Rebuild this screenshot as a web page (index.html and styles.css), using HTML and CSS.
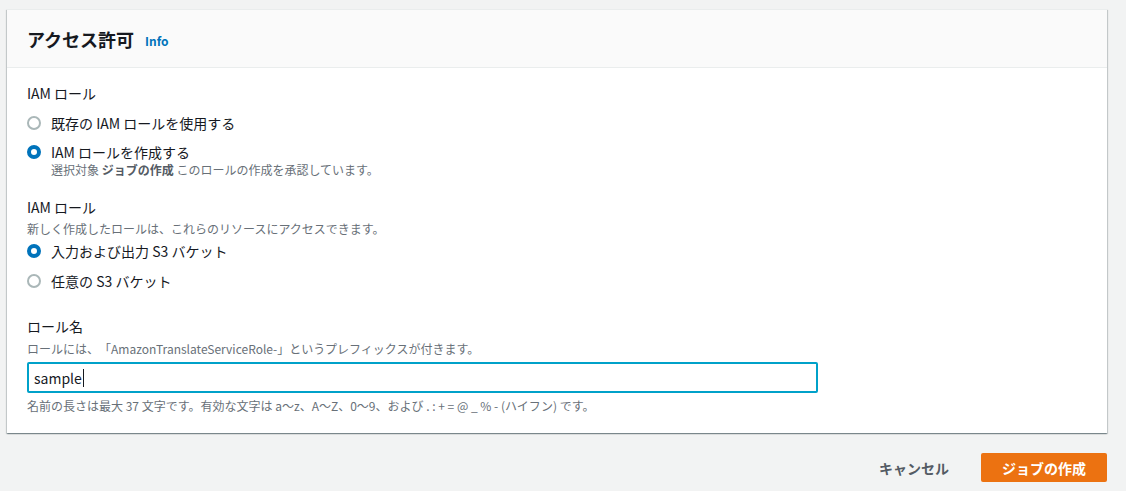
FILE: index.html
```html
<!DOCTYPE html>
<html lang="ja">
<head>
  <meta charset="UTF-8" />
  <meta name="viewport" content="width=device-width, initial-scale=1.0"/>
  <title>アクセス許可</title>
  <link rel="stylesheet" href="styles.css">
</head>
<body>

  <main class="panel">
    <div class="panel-header">
      <h2>アクセス許可</h2>
      <a class="info-link" href="#">Info</a>
    </div>

    <div class="panel-body">
      <div class="field">
        <div class="field-label">IAM ロール</div>
        <label class="radio-row">
          <span class="radio"></span>
          <span class="radio-text">既存の IAM ロールを使用する</span>
        </label>
        <label class="radio-row with-desc">
          <span class="radio checked"></span>
          <span class="radio-text">
            IAM ロールを作成する
            <span class="radio-desc">選択対象 <b>ジョブの作成</b> このロールの作成を承認しています。</span>
          </span>
        </label>
      </div>

      <div class="field second">
        <div class="field-label">IAM ロール</div>
        <div class="field-desc">新しく作成したロールは、これらのリソースにアクセスできます。</div>
        <label class="radio-row tight">
          <span class="radio checked"></span>
          <span class="radio-text">入力および出力 S3 バケット</span>
        </label>
        <label class="radio-row">
          <span class="radio"></span>
          <span class="radio-text">任意の S3 バケット</span>
        </label>
      </div>

      <div class="field third">
        <div class="field-label">ロール名</div>
        <div class="field-desc">ロールには、「AmazonTranslateServiceRole-」というプレフィックスが付きます。</div>
        <div class="text-input">sample<span class="caret"></span></div>
        <div class="field-desc constraint">名前の長さは最大 37 文字です。有効な文字は a～z、A～Z、0～9、および . : + = @ _ % - (ハイフン) です。</div>
      </div>
    </div>
  </main>

  <div class="actions">
    <button class="btn-link">キャンセル</button>
    <button class="btn-primary">ジョブの作成</button>
  </div>

</body>
</html>
```

FILE: styles.css
```css
* {
  margin: 0;
  padding: 0;
  box-sizing: border-box;
}

body {
  font-family: "Noto Sans CJK JP", "Noto Sans", sans-serif;
  font-size: 14px;
  color: #16191f;
  background: #f2f3f3;
  padding: 9px 19px 0 7px;
  text-spacing-trim: space-all;
}

.panel {
  background: white;
  box-shadow: 0 1px 1px 0 rgba(0, 28, 36, 0.3), 1px 1px 1px 0 rgba(0, 28, 36, 0.15), -1px 1px 1px 0 rgba(0, 28, 36, 0.15);
  border-top: 1px solid #eaeded;
}

.panel-header {
  background: #fafafa;
  border-bottom: 1px solid #eaeded;
  height: 58px;
  padding: 0 20px;
  display: flex;
  align-items: center;
  gap: 11px;
}

.panel-header h2 {
  font-size: 18px;
  font-weight: bold;
  line-height: 22px;
}

.info-link {
  color: #0073bb;
  font-size: 12px;
  font-weight: bold;
  text-decoration: none;
  padding-top: 3px;
}

.panel-body {
  padding: 14px 20px 19px;
}

.field-label {
  line-height: 22px;
}

.field-desc {
  font-size: 12px;
  line-height: 16px;
  color: #687078;
  margin-top: 3px;
}

.radio-row {
  display: flex;
  align-items: flex-start;
  gap: 10px;
  line-height: 22px;
  margin-top: 8px;
}

.radio-row.tight {
  margin-top: 3px;
}

.radio {
  width: 14px;
  height: 14px;
  border-radius: 50%;
  border: 2px solid #aab7b8;
  margin-top: 4px;
  flex-shrink: 0;
}

.radio.checked {
  border: 4px solid #0073bb;
}

.with-desc {
  line-height: 20px;
}

.with-desc .radio {
  margin-top: 3px;
}

.radio-text {
  display: flex;
  flex-direction: column;
}

.radio-desc {
  font-size: 12px;
  line-height: 16px;
  color: #687078;
}

.radio-desc b {
  color: #545b64;
}

.second {
  margin-top: 18px;
}

.third {
  margin-top: 23px;
}

.third .field-desc {
  margin-top: 4px;
}

.text-input {
  width: 791px;
  height: 31px;
  margin-top: 5px;
  border: 2px solid #00a1c9;
  border-radius: 2px;
  padding: 0 5px;
  display: flex;
  align-items: center;
  line-height: 20px;
}

.caret {
  display: inline-block;
  width: 1px;
  height: 18px;
  background: #16191f;
  margin-left: 1px;
}

.third .constraint {
  margin-top: 5px;
}

.actions {
  display: flex;
  justify-content: flex-end;
  align-items: center;
  gap: 30px;
  margin-top: 20px;
}

.btn-link {
  background: none;
  border: none;
  font-family: inherit;
  font-size: 14px;
  font-weight: bold;
  color: #545b64;
  padding: 4px 2px;
}

.btn-primary {
  background: #ec7211;
  border: none;
  border-radius: 2px;
  color: white;
  font-family: inherit;
  font-size: 14px;
  font-weight: bold;
  width: 126px;
  height: 29px;
}
```
